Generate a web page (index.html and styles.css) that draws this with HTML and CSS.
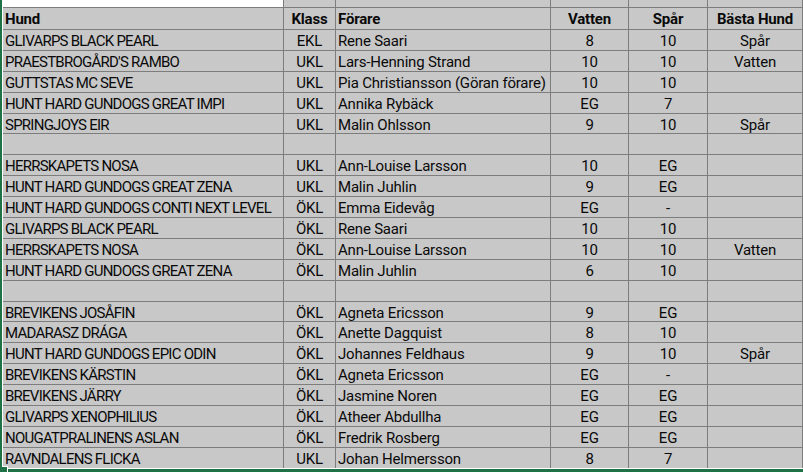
FILE: index.html
```html
<!DOCTYPE html>
<html lang="sv">
<head>
<meta charset="utf-8">
<title>Resultat</title>
<link rel="stylesheet" href="styles.css">
</head>
<body>
<div class="frame">
  <div class="sheet">
    <div class="row top"><div class="c blank-white"></div><div class="c"></div><div class="c"></div><div class="c"></div><div class="c"></div><div class="c"></div><div class="c"></div></div>
    <div class="row head"><div class="c">Hund</div><div class="c mid">Klass</div><div class="c">Förare</div><div class="c mid">Vatten</div><div class="c mid">Spår</div><div class="c mid">Bästa Hund</div><div class="c"></div></div>

    <div class="row"><div class="c">GLIVARPS BLACK PEARL</div><div class="c mid">EKL</div><div class="c">Rene Saari</div><div class="c mid">8</div><div class="c mid">10</div><div class="c mid">Spår</div><div class="c"></div></div>
    <div class="row"><div class="c">PRAESTBROGÅRD'S RAMBO</div><div class="c mid">UKL</div><div class="c">Lars-Henning Strand</div><div class="c mid">10</div><div class="c mid">10</div><div class="c mid">Vatten</div><div class="c"></div></div>
    <div class="row"><div class="c">GUTTSTAS MC SEVE</div><div class="c mid">UKL</div><div class="c">Pia Christiansson (Göran förare)</div><div class="c mid">10</div><div class="c mid">10</div><div class="c mid"></div><div class="c"></div></div>
    <div class="row"><div class="c">HUNT HARD GUNDOGS GREAT IMPI</div><div class="c mid">UKL</div><div class="c">Annika Rybäck</div><div class="c mid">EG</div><div class="c mid">7</div><div class="c mid"></div><div class="c"></div></div>
    <div class="row"><div class="c">SPRINGJOYS EIR</div><div class="c mid">UKL</div><div class="c">Malin Ohlsson</div><div class="c mid">9</div><div class="c mid">10</div><div class="c mid">Spår</div><div class="c"></div></div>
    <div class="row"><div class="c"></div><div class="c"></div><div class="c"></div><div class="c"></div><div class="c"></div><div class="c"></div><div class="c"></div></div>

    <div class="row"><div class="c">HERRSKAPETS NOSA</div><div class="c mid">UKL</div><div class="c">Ann-Louise Larsson</div><div class="c mid">10</div><div class="c mid">EG</div><div class="c mid"></div><div class="c"></div></div>
    <div class="row"><div class="c">HUNT HARD GUNDOGS GREAT ZENA</div><div class="c mid">UKL</div><div class="c">Malin Juhlin</div><div class="c mid">9</div><div class="c mid">EG</div><div class="c mid"></div><div class="c"></div></div>
    <div class="row"><div class="c">HUNT HARD GUNDOGS CONTI NEXT LEVEL</div><div class="c mid">ÖKL</div><div class="c">Emma Eidevåg</div><div class="c mid">EG</div><div class="c mid">-</div><div class="c mid"></div><div class="c"></div></div>
    <div class="row"><div class="c">GLIVARPS BLACK PEARL</div><div class="c mid">ÖKL</div><div class="c">Rene Saari</div><div class="c mid">10</div><div class="c mid">10</div><div class="c mid"></div><div class="c"></div></div>
    <div class="row"><div class="c">HERRSKAPETS NOSA</div><div class="c mid">ÖKL</div><div class="c">Ann-Louise Larsson</div><div class="c mid">10</div><div class="c mid">10</div><div class="c mid">Vatten</div><div class="c"></div></div>
    <div class="row"><div class="c">HUNT HARD GUNDOGS GREAT ZENA</div><div class="c mid">ÖKL</div><div class="c">Malin Juhlin</div><div class="c mid">6</div><div class="c mid">10</div><div class="c mid"></div><div class="c"></div></div>
    <div class="row"><div class="c"></div><div class="c"></div><div class="c"></div><div class="c"></div><div class="c"></div><div class="c"></div><div class="c"></div></div>

    <div class="row"><div class="c">BREVIKENS JOSÅFIN</div><div class="c mid">ÖKL</div><div class="c">Agneta Ericsson</div><div class="c mid">9</div><div class="c mid">EG</div><div class="c mid"></div><div class="c"></div></div>
    <div class="row"><div class="c">MADARASZ DRÁGA</div><div class="c mid">ÖKL</div><div class="c">Anette Dagquist</div><div class="c mid">8</div><div class="c mid">10</div><div class="c mid"></div><div class="c"></div></div>
    <div class="row"><div class="c">HUNT HARD GUNDOGS EPIC ODIN</div><div class="c mid">ÖKL</div><div class="c">Johannes Feldhaus</div><div class="c mid">9</div><div class="c mid">10</div><div class="c mid">Spår</div><div class="c"></div></div>
    <div class="row"><div class="c">BREVIKENS KÄRSTIN</div><div class="c mid">ÖKL</div><div class="c">Agneta Ericsson</div><div class="c mid">EG</div><div class="c mid">-</div><div class="c mid"></div><div class="c"></div></div>
    <div class="row"><div class="c">BREVIKENS JÄRRY</div><div class="c mid">ÖKL</div><div class="c">Jasmine Noren</div><div class="c mid">EG</div><div class="c mid">EG</div><div class="c mid"></div><div class="c"></div></div>
    <div class="row"><div class="c">GLIVARPS XENOPHILIUS</div><div class="c mid">ÖKL</div><div class="c">Atheer Abdullha</div><div class="c mid">EG</div><div class="c mid">EG</div><div class="c mid"></div><div class="c"></div></div>
    <div class="row"><div class="c">NOUGATPRALINENS ASLAN</div><div class="c mid">ÖKL</div><div class="c">Fredrik Rosberg</div><div class="c mid">EG</div><div class="c mid">EG</div><div class="c mid"></div><div class="c"></div></div>
    <div class="row"><div class="c">RAVNDALENS FLICKA</div><div class="c mid">UKL</div><div class="c">Johan Helmersson</div><div class="c mid">8</div><div class="c mid">7</div><div class="c mid"></div><div class="c"></div></div>
  </div>
  <div class="handle"></div>
</div>
</body>
</html>
```

FILE: styles.css
```css
html, body {
  margin: 0;
  padding: 0;
  background: #ffffff;
}

body {
  width: 803px;
  height: 472px;
  overflow: hidden;
  font-family: Roboto, "Noto Sans", "Liberation Sans", sans-serif;
  font-size: 15px;
  letter-spacing: -0.2px;
  color: #0a0a0a;
}

.frame {
  position: relative;
  border-left: 2px solid #1f7246;
  border-bottom: 3px solid #1f7246;
  padding: 0 0 1px 1px;
  background: #ffffff;
}

.sheet {
  display: grid;
  grid-template-columns: 280px 51px 214px 77px 78px 94px 1fr;
  grid-template-rows: 7px 21px repeat(21, 19.9px);
  gap: 1px;
  background: #7d7d7d;
}

.row {
  display: contents;
}

.c {
  background: #c8c8c8;
  padding: 2px 2px 0;
  display: flex;
  align-items: center;
  white-space: nowrap;
  overflow: hidden;
  min-width: 0;
}

.head .c,
.top .c {
  padding-top: 0;
}

.row:not(.head) > .c:first-child {
  letter-spacing: -0.75px;
}

.c.mid {
  justify-content: center;
  padding-left: 0;
  padding-right: 0;
}

.top .blank-white {
  background: #ffffff;
}

.head .c {
  font-weight: bold;
}

.handle {
  position: absolute;
  left: 0;
  bottom: -3px;
  width: 5px;
  height: 5px;
  background: #1f7246;
  border: 1px solid #ffffff;
  border-left: 0;
  border-bottom: 0;
}
```
